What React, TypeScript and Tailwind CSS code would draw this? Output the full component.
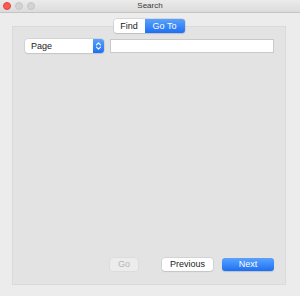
import React from 'react';

const font = { fontFamily: '"Liberation Sans", Arial, sans-serif' };

export default function App() {
  return (
    <div className="w-[300px] h-[296px] bg-[#ececec] flex flex-col overflow-hidden" style={font}>
      {/* title bar */}
      <div className="relative h-[13px] flex items-center justify-center bg-gradient-to-b from-[#ebebeb] to-[#dcdcdc] border-b border-[#c4c4c4]">
        <div className="absolute left-[3px] top-[2px] flex gap-[4px]">
          <span className="w-[8px] h-[8px] rounded-full bg-[#fc5b57] border border-[#e0443e]" />
          <span className="w-[8px] h-[8px] rounded-full bg-[#d3d3d3] border border-[#c6c6c6]" />
          <span className="w-[8px] h-[8px] rounded-full bg-[#d3d3d3] border border-[#c6c6c6]" />
        </div>
        <span className="text-[8px] leading-none text-[#3a3a3a]">Search</span>
      </div>

      <div className="flex flex-col items-center pl-[12px] pr-[14px] pt-[6px]">
        {/* segmented control */}
        <div className="relative z-10 flex h-[14px] rounded-[3px] shadow-[0_0_0_0.5px_#c0c0c0,0_1px_1px_rgba(0,0,0,0.15)] text-[9px] leading-none">
          <div className="w-[31px] flex items-center justify-center bg-white rounded-l-[3px] text-[#222]">Find</div>
          <div className="w-[40px] flex items-center justify-center bg-gradient-to-b from-[#5aa2fb] to-[#1c6ff4] rounded-r-[3px] text-white">Go To</div>
        </div>

        {/* tab panel */}
        <div className="w-[274px] h-[259px] -mt-[7px] bg-[#e3e3e3] border border-[#dadada] flex flex-col pl-[12px] pr-[11px] pt-[12px] pb-[13px]">
          <div className="flex items-center gap-[6px]">
            <div className="w-[79px] h-[14px] bg-white rounded-[3px] shadow-[0_0_0_0.5px_#c4c4c4,0_1px_1px_rgba(0,0,0,0.12)] flex items-center justify-between">
              <span className="pl-[6px] text-[9px] leading-none text-[#222]">Page</span>
              <span className="w-[11px] h-[14px] rounded-r-[3px] bg-gradient-to-b from-[#5aa2fb] to-[#1c6ff4] flex items-center justify-center">
                <svg width="7" height="10" viewBox="0 0 7 10" fill="none" stroke="white" strokeWidth="1.1" strokeLinecap="round" strokeLinejoin="round">
                  <path d="M1.5 3.8 L3.5 1.8 L5.5 3.8" />
                  <path d="M1.5 6.2 L3.5 8.2 L5.5 6.2" />
                </svg>
              </span>
            </div>
            <div className="w-[164px] h-[14px] bg-white border border-[#c9c9c9]" />
          </div>

          <div className="flex-1" />

          <div className="flex items-center justify-end text-[9px] leading-none">
            <div className="w-[28px] h-[13px] mr-[24px] flex items-center justify-center rounded-[3px] bg-[#ececec] text-[#b5b5b5] shadow-[0_0_0_0.5px_#d6d6d6]">Go</div>
            <div className="w-[51px] h-[13px] mr-[9px] flex items-center justify-center rounded-[3px] bg-white text-[#222] shadow-[0_0_0_0.5px_#c4c4c4,0_1px_1px_rgba(0,0,0,0.12)]">Previous</div>
            <div className="w-[52px] h-[13px] flex items-center justify-center rounded-[3px] bg-gradient-to-b from-[#5aa2fb] to-[#1c6ff4] text-white shadow-[0_1px_1px_rgba(0,0,0,0.15)]">Next</div>
          </div>
        </div>
      </div>
    </div>
  );
}
